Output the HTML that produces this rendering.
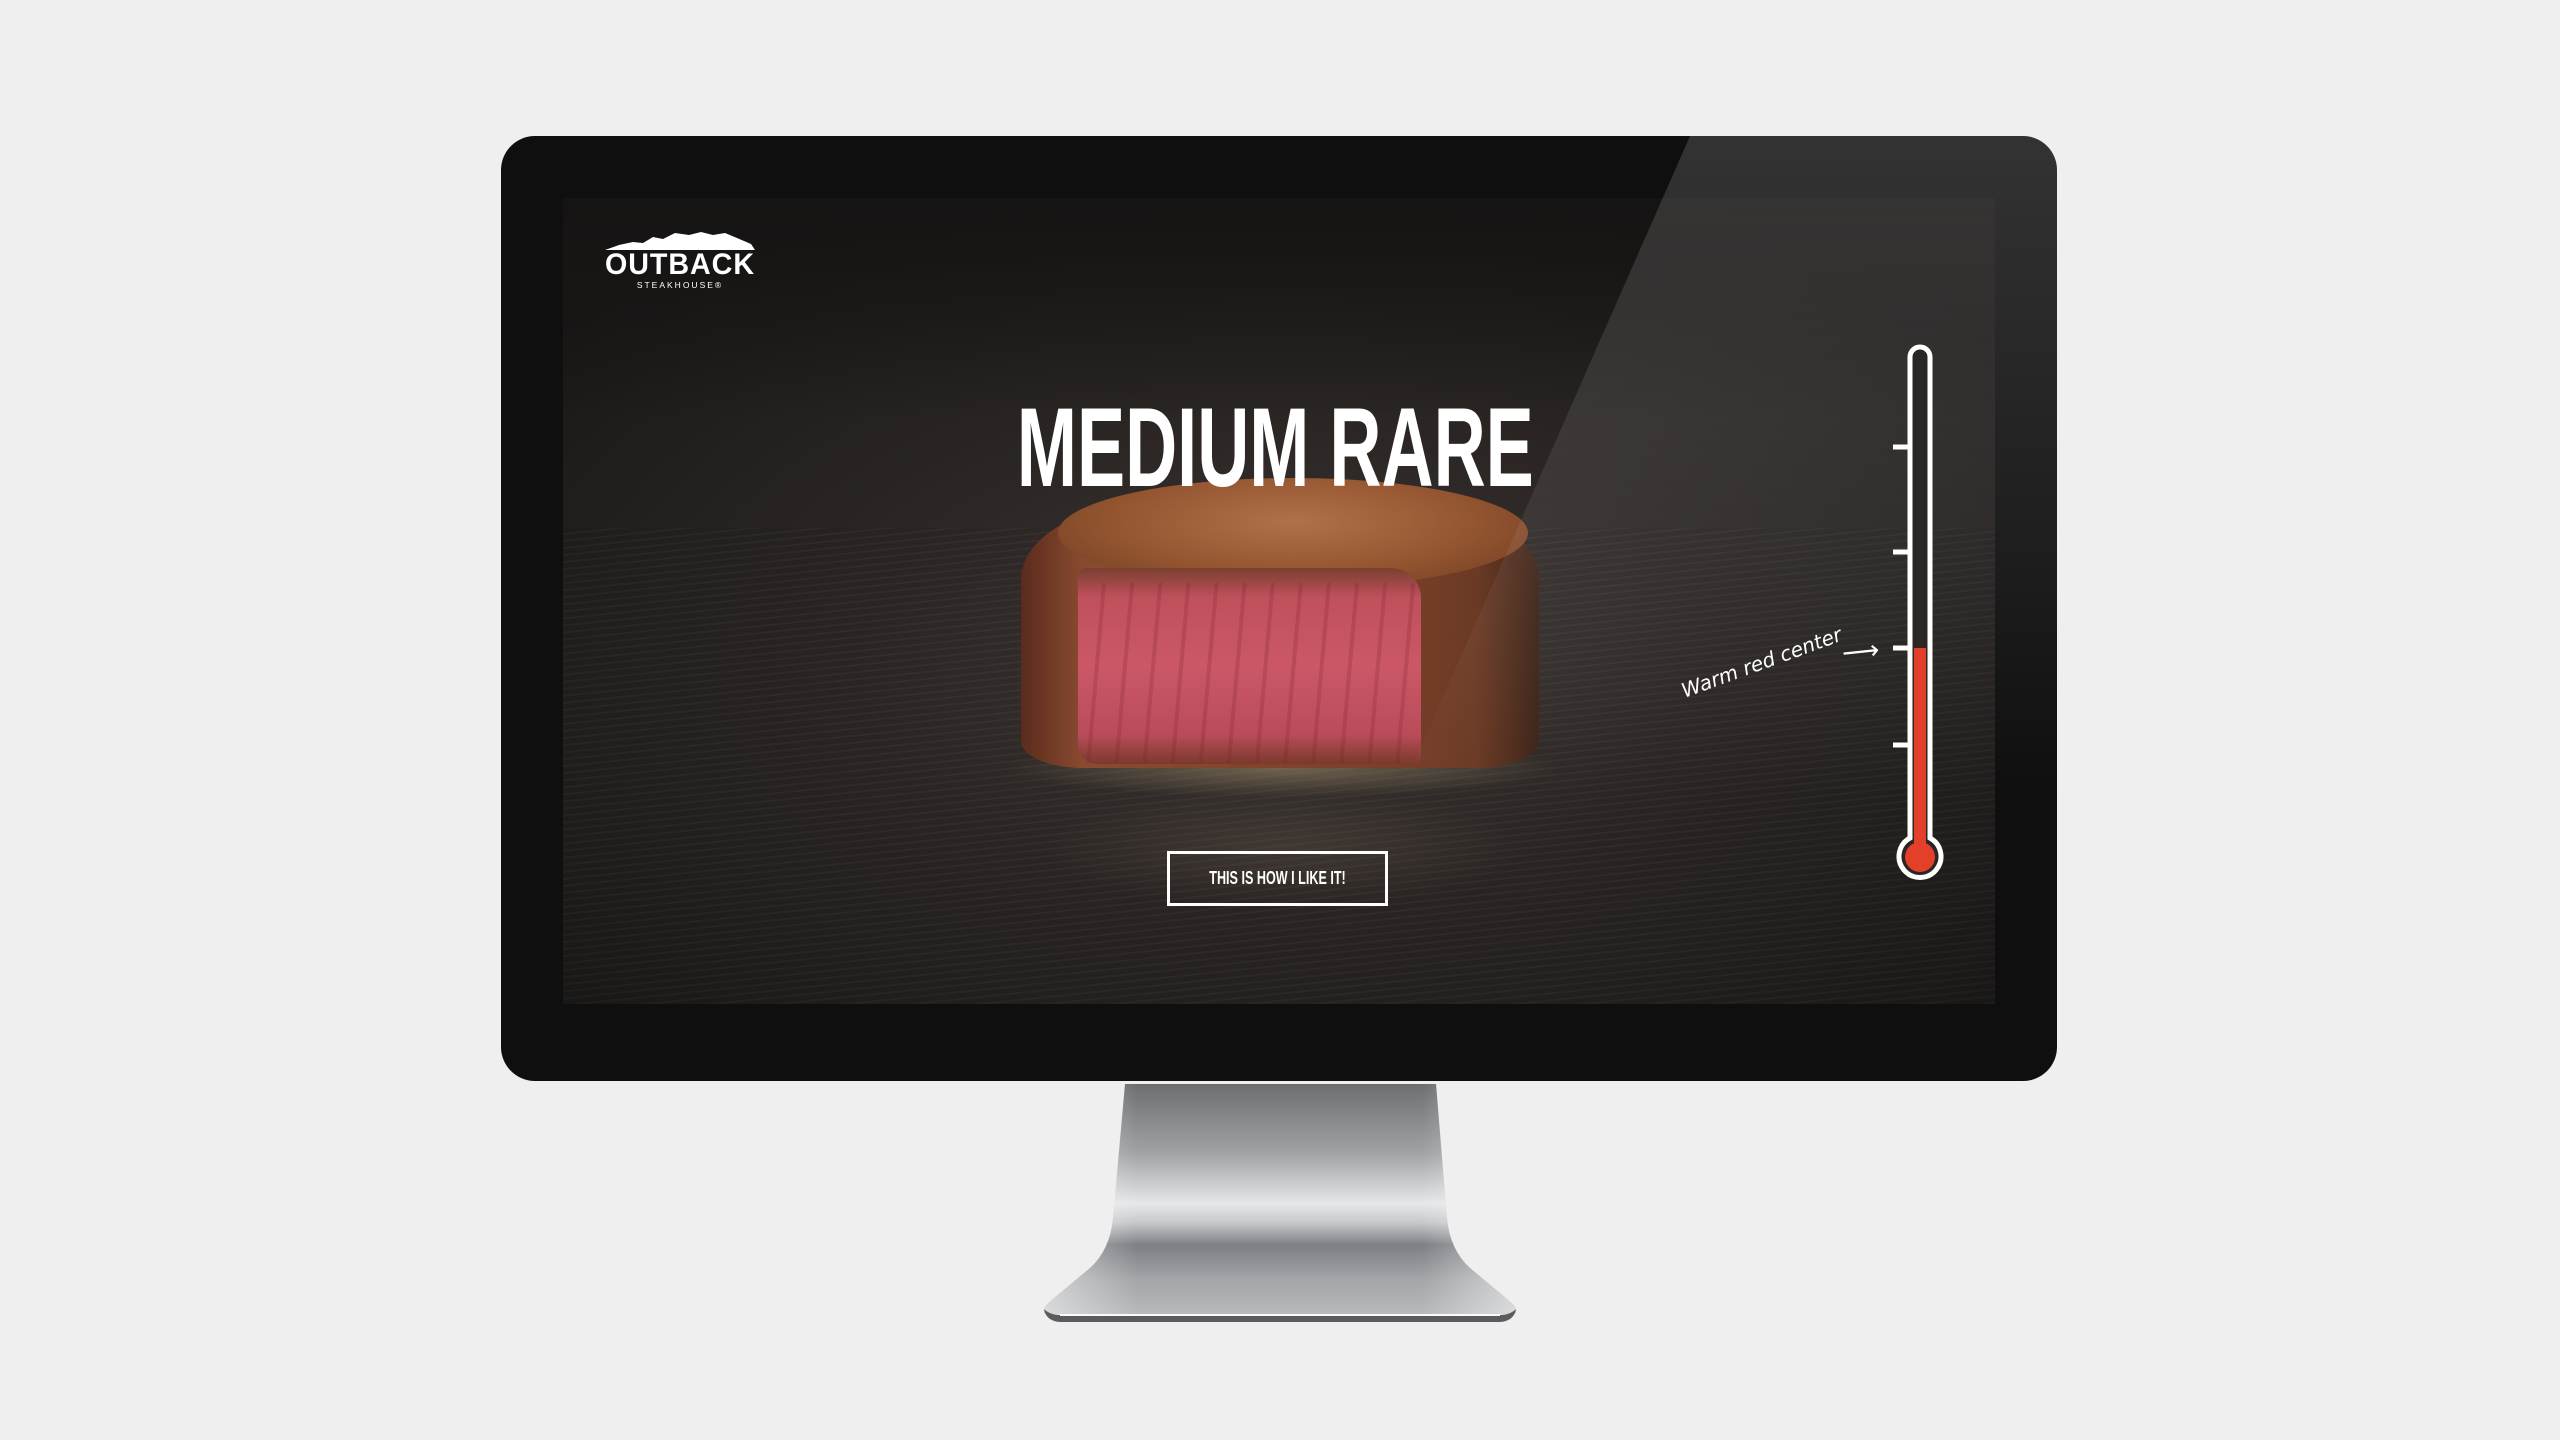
<!DOCTYPE html>
<html><head><meta charset="utf-8"><style>
*{margin:0;padding:0}
body{width:2560px;height:1440px;background:#efefef;position:relative;overflow:hidden;font-family:"Liberation Sans",sans-serif}
.abs{position:absolute}
</style></head><body>
<!-- stand -->
<svg class="abs" style="left:0;top:0" width="2560" height="1440">
  <defs>
    <linearGradient id="st" x1="0" y1="1084" x2="0" y2="1314" gradientUnits="userSpaceOnUse">
      <stop offset="0" stop-color="#6c6e72"/>
      <stop offset="0.3" stop-color="#a0a2a6"/>
      <stop offset="0.52" stop-color="#e6e7e9"/>
      <stop offset="0.6" stop-color="#c9cacd"/>
      <stop offset="0.7" stop-color="#7c7f84"/>
      <stop offset="0.85" stop-color="#a3a5a8"/>
      <stop offset="1" stop-color="#b8b9bb"/>
    </linearGradient>
    <linearGradient id="sh" x1="1043" y1="0" x2="1516" y2="0" gradientUnits="userSpaceOnUse">
      <stop offset="0" stop-color="#fff" stop-opacity="0.5"/>
      <stop offset="0.2" stop-color="#fff" stop-opacity="0"/>
      <stop offset="0.8" stop-color="#fff" stop-opacity="0"/>
      <stop offset="1" stop-color="#fff" stop-opacity="0.5"/>
    </linearGradient>
  </defs>
  <path d="M1050 1314 Q1040 1317 1046 1305 L1060 1293 L1090 1268 Q1110 1250 1113 1218 L1125 1084 L1436 1084 L1447 1218 Q1450 1250 1470 1268 L1500 1293 L1514 1305 Q1520 1317 1510 1314 Z" fill="url(#st)"/>
  <path d="M1050 1314 Q1040 1317 1046 1305 L1060 1293 L1090 1268 Q1110 1250 1113 1218 L1125 1084 L1436 1084 L1447 1218 Q1450 1250 1470 1268 L1500 1293 L1514 1305 Q1520 1317 1510 1314 Z" fill="url(#sh)"/>
  <path d="M1044 1309 Q1046 1321 1060 1322 L1500 1322 Q1514 1321 1516 1309 Q1510 1315 1500 1315 L1060 1315 Q1050 1315 1044 1309 Z" fill="#5a5b5e"/>
  <rect x="1060" y="1314" width="440" height="2" fill="#fafafa"/>
</svg>
<!-- bezel -->
<div class="abs" style="left:501px;top:136px;width:1556px;height:945px;background:#0f0f0f;border-radius:34px;overflow:hidden">
  <div class="abs" style="left:62px;top:62px;width:1432px;height:806px;overflow:hidden;background:radial-gradient(ellipse 950px 520px at 720px 470px,#3e3835 0%,#2c2725 45%,#1a1817 100%)">
    <div class="abs" style="left:0;top:0;width:1432px;height:220px;background:linear-gradient(180deg,#161413,rgba(22,20,19,0))"></div>
    <div class="abs" style="left:0;top:330px;width:1432px;height:476px;background:repeating-linear-gradient(-6deg,rgba(255,255,255,0.025) 0 2px,rgba(0,0,0,0.05) 2px 7px)"></div>
    <!-- logo -->
    <svg class="abs" style="left:38px;top:32px" width="160" height="64" viewBox="0 0 160 64">
      <path d="M4 20 L18 15 L32 12 L42 13 L52 7 L62 9 L74 3 L88 5 L100 2 L112 5 L124 3 L136 8 L150 14 L154 20 Z" fill="#fff"/>
      <text x="79" y="44" text-anchor="middle" fill="#fff" font-family="Liberation Sans" font-weight="bold" font-size="30" letter-spacing="1" textLength="150" lengthAdjust="spacingAndGlyphs">OUTBACK</text>
      <text x="79" y="58" text-anchor="middle" fill="#fff" font-family="Liberation Sans" font-size="8.5" letter-spacing="2">STEAKHOUSE®</text>
    </svg>
    <!-- steak shadow/juice -->
    <div class="abs" style="left:440px;top:540px;width:560px;height:60px;border-radius:50%;background:radial-gradient(ellipse,rgba(160,140,105,0.55),rgba(60,50,40,0) 70%)"></div>
    <div class="abs" style="left:480px;top:590px;width:480px;height:120px;border-radius:50%;background:radial-gradient(ellipse,rgba(120,100,85,0.25),rgba(60,50,40,0) 70%)"></div>
    <!-- steak body -->
    <div class="abs" style="left:458px;top:300px;width:518px;height:270px;border-radius:30% 30% 12% 12%/30% 30% 10% 10%;background:linear-gradient(90deg,#5a2c1c,#8a4a30 12%,#7c3f2a 70%,#6a3a24 88%,#3d2318)"></div>
    <div class="abs" style="left:495px;top:280px;width:470px;height:110px;border-radius:50%;background:radial-gradient(ellipse at 50% 40%,#b0704a,#93552f 55%,#6c3a22 100%)"></div>
    <div class="abs" style="left:515px;top:370px;width:343px;height:196px;border-radius:8px 30px 6px 20px;background:linear-gradient(180deg,#7a3f30 0%,#c0505c 15%,#cb5767 50%,#b94c5a 85%,#7a3a2c 100%)"></div>
    <div class="abs" style="left:515px;top:385px;width:343px;height:180px;background:repeating-linear-gradient(95deg,rgba(0,0,0,0) 0 24px,rgba(120,30,40,0.22) 24px 28px)"></div>
    <!-- title -->
    <div class="abs" style="left:262px;top:194px;width:900px;height:112px;text-align:center">
      <div style="display:inline-block;white-space:nowrap;color:#fff;font-weight:bold;font-size:112px;line-height:112px;transform:scaleX(0.644);transform-origin:center">MEDIUM RARE</div>
    </div>
    <!-- button -->
    <div class="abs" style="left:604px;top:653px;width:215px;height:49px;border:3px solid #fff;text-align:center;line-height:49px;color:#fff;font-weight:bold;font-size:18px;white-space:nowrap"><span style="display:inline-block;transform:scaleX(0.7)">THIS IS HOW I LIKE IT!</span></div>
  </div>
  <!-- glare -->
  <div class="abs" style="left:0;top:0;width:1556px;height:945px;background:linear-gradient(180deg,rgba(255,255,255,0.15),rgba(255,255,255,0.06) 45%,rgba(255,255,255,0) 70%);clip-path:polygon(1189px 0,1556px 0,1556px 945px,773px 945px)"></div>
</div>
<!-- thermometer -->
<svg class="abs" style="left:1880px;top:330px" width="80" height="560" viewBox="0 0 80 560">
  <g stroke="#fff" stroke-width="5">
    <line x1="13" y1="117" x2="30" y2="117"/><line x1="13" y1="222" x2="30" y2="222"/>
    <line x1="13" y1="318" x2="30" y2="318"/><line x1="13" y1="415" x2="30" y2="415"/>
  </g>
  <path d="M30 27 a10 10 0 0 1 20 0 V508 A21 21 0 1 1 30 508 Z" fill="#2a2624" stroke="#fff" stroke-width="5"/>
  <rect x="34" y="318" width="12" height="205" fill="#e2402a"/>
  <circle cx="40" cy="527" r="15" fill="#e2402a"/>
</svg>
<div class="abs" style="left:1678px;top:680px;color:#fff;font-family:'DejaVu Sans',sans-serif;font-style:italic;font-size:20px;transform:rotate(-20deg);transform-origin:left top;white-space:nowrap">Warm red center</div>
<div class="abs" style="left:1842px;top:636px;color:#fff;font-size:26px;transform:rotate(-6deg)">⟶</div>
</body></html>
